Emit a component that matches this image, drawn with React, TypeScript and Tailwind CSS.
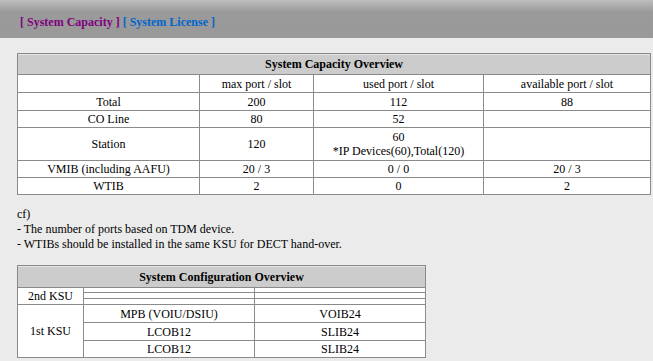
import React from "react";

const cell = "border border-[#8a8a8a] text-center align-middle p-0";

const capacityRows = [
  { name: "Total", max: "200", used: ["112"], avail: "88", h: "h-[18px]" },
  { name: "CO Line", max: "80", used: ["52"], avail: "", h: "h-[17px]" },
  {
    name: "Station",
    max: "120",
    used: ["60", "*IP Devices(60),Total(120)"],
    avail: "",
    h: "h-[33px]",
  },
  { name: "VMIB (including AAFU)", max: "20 / 3", used: ["0 / 0"], avail: "20 / 3", h: "h-[17px]" },
  { name: "WTIB", max: "2", used: ["0"], avail: "2", h: "h-[17px]" },
];

const CapacityTable = () => {
  return (
    <table className="border-collapse w-[633px] table-fixed bg-white text-[12px] leading-[14px] text-black border border-[#888]">
      <colgroup>
        <col className="w-[182px]" />
        <col className="w-[114px]" />
        <col className="w-[170px]" />
        <col className="w-[167px]" />
      </colgroup>
      <tbody>
        <tr className="h-[21px]">
          <td
            colSpan={4}
            className={`${cell} bg-[#cccccc] font-bold text-[12px] shadow-[inset_0_1px_0_#e4e4e4]`}
          >
            System Capacity Overview
          </td>
        </tr>
        <tr className="h-[18px]">
          <td className={cell}></td>
          <td className={cell}>max port / slot</td>
          <td className={cell}>used port / slot</td>
          <td className={cell}>available port / slot</td>
        </tr>
        {capacityRows.map((r, i) => (
          <tr key={i} className={r.h}>
            <td className={cell}>{r.name}</td>
            <td className={cell}>{r.max}</td>
            <td className={cell}>
              {r.used.map((u, j) => (
                <div key={j}>{u}</div>
              ))}
            </td>
            <td className={cell}>{r.avail}</td>
          </tr>
        ))}
      </tbody>
    </table>
  );
};

const ConfigTable = () => {
  return (
    <table className="border-collapse w-[408px] table-fixed bg-white text-[12px] leading-[14px] text-black border border-[#888]">
      <colgroup>
        <col className="w-[66px]" />
        <col className="w-[171px]" />
        <col className="w-[171px]" />
      </colgroup>
      <tbody>
        <tr className="h-[22px]">
          <td
            colSpan={3}
            className={`${cell} bg-[#cccccc] font-bold text-[12px] shadow-[inset_0_1px_0_#e4e4e4]`}
          >
            System Configuration Overview
          </td>
        </tr>
        <tr className="h-[5px]">
          <td rowSpan={3} className={cell}>
            2nd KSU
          </td>
          <td className={`${cell} h-[5px]`}></td>
          <td className={`${cell} h-[5px]`}></td>
        </tr>
        <tr className="h-[6px]">
          <td className={`${cell} h-[6px]`}></td>
          <td className={`${cell} h-[6px]`}></td>
        </tr>
        <tr className="h-[6px]">
          <td className={`${cell} h-[6px]`}></td>
          <td className={`${cell} h-[6px]`}></td>
        </tr>
        <tr className="h-[18px]">
          <td rowSpan={3} className={cell}>
            1st KSU
          </td>
          <td className={cell}>MPB (VOIU/DSIU)</td>
          <td className={cell}>VOIB24</td>
        </tr>
        <tr className="h-[18px]">
          <td className={cell}>LCOB12</td>
          <td className={cell}>SLIB24</td>
        </tr>
        <tr className="h-[17px]">
          <td className={cell}>LCOB12</td>
          <td className={cell}>SLIB24</td>
        </tr>
      </tbody>
    </table>
  );
};

export default function App() {
  return (
    <div className="w-[653px] h-[361px] bg-[#ebebeb] overflow-hidden font-['Liberation_Serif','Times_New_Roman',serif]">
      <div className="h-[38px] bg-gradient-to-b from-[#bdbdbd] via-[#9a9a9a] via-[32%] to-[#999999] flex items-center pl-[20px] pt-[5px] text-[12px] font-bold whitespace-pre">
        <span className="text-[#800080]">[ System Capacity ]</span>
        <span> </span>
        <span className="text-[#0066cc]">[ System License ]</span>
      </div>

      <div className="pl-[17px] pt-[15px]">
        <CapacityTable />

        <div className="mt-[12px] text-[12px] leading-[15px] text-black">
          <div>cf)</div>
          <div>- The number of ports based on TDM device.</div>
          <div>- WTIBs should be installed in the same KSU for DECT hand-over.</div>
        </div>

        <div className="mt-[13px]">
          <ConfigTable />
        </div>
      </div>
    </div>
  );
}
